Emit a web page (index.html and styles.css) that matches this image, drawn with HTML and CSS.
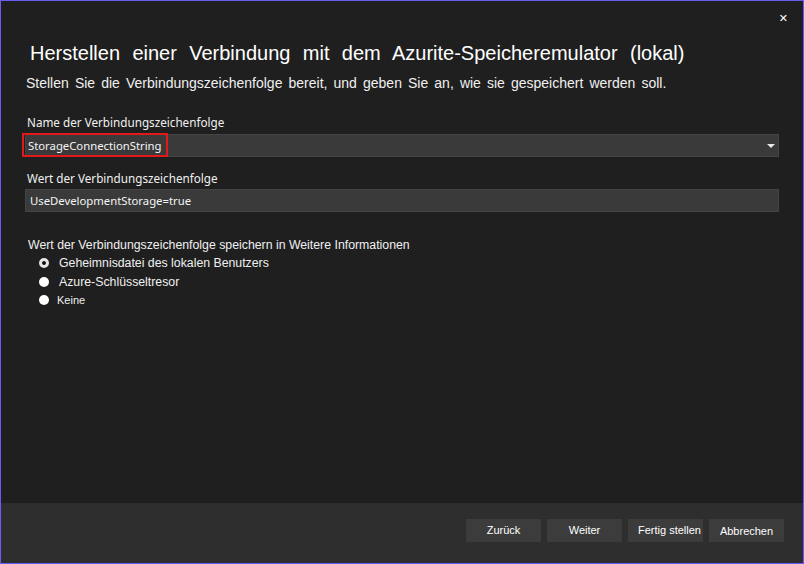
FILE: index.html
```html
<!DOCTYPE html>
<html lang="de">
<head>
    <meta charset="UTF-8">
    <title>Azurite-Speicheremulator</title>
    <link rel="stylesheet" href="styles.css">
</head>
<body>
    <div class="window">
        <div class="main">
            <div class="topbar">
                <span class="close">&#x2715;</span>
            </div>
            <h1 class="title">Herstellen einer Verbindung mit dem Azurite-Speicheremulator (lokal)</h1>
            <p class="subtitle">Stellen Sie die Verbindungszeichenfolge bereit, und geben Sie an, wie sie gespeichert werden soll.</p>

            <div class="field">
                <div class="label">Name der Verbindungszeichenfolge</div>
                <div class="box select">
                    <span class="hilite">StorageConnectionString</span>
                    <span class="arrow"></span>
                </div>
            </div>

            <div class="field">
                <div class="label">Wert der Verbindungszeichenfolge</div>
                <div class="box">UseDevelopmentStorage=true</div>
            </div>

            <div class="store">
                <div class="store-label">Wert der Verbindungszeichenfolge speichern in Weitere Informationen</div>
                <ul class="radios">
                    <li><span class="radio checked"></span>Geheimnisdatei des lokalen Benutzers</li>
                    <li><span class="radio"></span>Azure-Schlüsseltresor</li>
                    <li class="small"><span class="radio"></span>Keine</li>
                </ul>
            </div>
        </div>
        <div class="footer">
            <button class="btn">Zurück</button>
            <button class="btn">Weiter</button>
            <button class="btn btn-wide">Fertig stellen</button>
            <button class="btn btn-low">Abbrechen</button>
        </div>
    </div>
</body>
</html>
```

FILE: styles.css
```css
*{
    margin: 0;
    padding: 0;
    box-sizing: border-box;
    list-style: none;
}
body{
    background-color: #1f1f1f;
}
.window{
    width: 804px;
    height: 564px;
    border: 1px solid #6a5cf2;
    background-color: #1f1f1f;
    color: #f0f0f0;
    display: flex;
    flex-direction: column;
    font-family: "Noto Sans", "Open Sans", sans-serif;
}
.main{
    flex: 1;
    padding: 0 24px 0 24px;
}
.topbar{
    height: 40px;
    display: flex;
    justify-content: flex-end;
    align-items: flex-start;
    padding-top: 11px;
}
.close{
    font-family: "DejaVu Sans", sans-serif;
    font-size: 11px;
    line-height: 14px;
    color: #ffffff;
    margin-right: -9px;
}
.title{
    font-family: "Liberation Sans", Arial, sans-serif;
    font-weight: normal;
    font-size: 20px;
    word-spacing: 6.8px;
    color: #ffffff;
    margin-left: 5px;
    line-height: 24px;
}
.subtitle{
    font-family: "Liberation Sans", Arial, sans-serif;
    font-size: 14px;
    word-spacing: 2.2px;
    color: #f0f0f0;
    margin: 10px 0 0 1px;
    line-height: 16px;
    white-space: nowrap;
}
.field{
    margin-top: 23px;
}
.field + .field{
    margin-top: 13px;
}
.label{
    font-size: 11.7px;
    line-height: 16px;
    margin-left: 2px;
    color: #f0f0f0;
}
.box{
    margin-top: 4px;
    height: 23px;
    background-color: #3a3a3a;
    border: 1px solid #444444;
    font-size: 11.3px;
    line-height: 21px;
    padding-left: 4px;
    color: #f4f4f4;
}
.field + .field .box{
    margin-top: 3px;
}
.select{
    position: relative;
    display: flex;
    align-items: center;
    justify-content: space-between;
    padding-left: 2px;
}
.hilite{
    position: relative;
    display: block;
    height: 21px;
}
.hilite::after{
    content: "";
    position: absolute;
    left: -6px;
    top: -2px;
    right: -6px;
    bottom: -1px;
    border: 2px solid #e01a1a;
}
.arrow{
    width: 0;
    height: 0;
    border-left: 4px solid transparent;
    border-right: 4px solid transparent;
    border-top: 4px solid #e8e8e8;
    margin-right: 3px;
}
.store{
    margin-top: 25px;
    margin-left: 3px;
    font-family: "Liberation Sans", Arial, sans-serif;
    font-size: 12.3px;
}
.store-label{
    line-height: 16px;
}
.radios{
    margin-left: 11px;
    margin-top: 0;
}
.radios li{
    display: flex;
    align-items: center;
    height: 19px;
}
.radios li.small{
    font-size: 11px;
    height: 18px;
}
.radio{
    width: 10px;
    height: 10px;
    border-radius: 50%;
    background-color: #ffffff;
    margin-right: 10px;
}
.radios li.small .radio{
    margin-right: 8px;
}
.radio.checked{
    border: 3px solid #e6e6e6;
    background: radial-gradient(circle, #111 0 2px, #fff 2.5px);
}
.footer{
    height: 60px;
    background-color: #2e2e2e;
    display: flex;
    justify-content: flex-end;
    align-items: flex-start;
    padding: 16px 19px 0 0;
    gap: 6px;
}
.btn{
    width: 75px;
    height: 23px;
    background-color: #3c3c3c;
    border: none;
    color: #ffffff;
    font-family: "Liberation Sans", Arial, sans-serif;
    font-size: 11px;
    line-height: 23px;
    padding-bottom: 3px;
}
.btn-wide{
    white-space: nowrap;
    overflow: visible;
    padding-left: 10px;
    text-align: left;
}
.btn-low{
    padding-bottom: 0;
    padding-top: 1px;
}
```
